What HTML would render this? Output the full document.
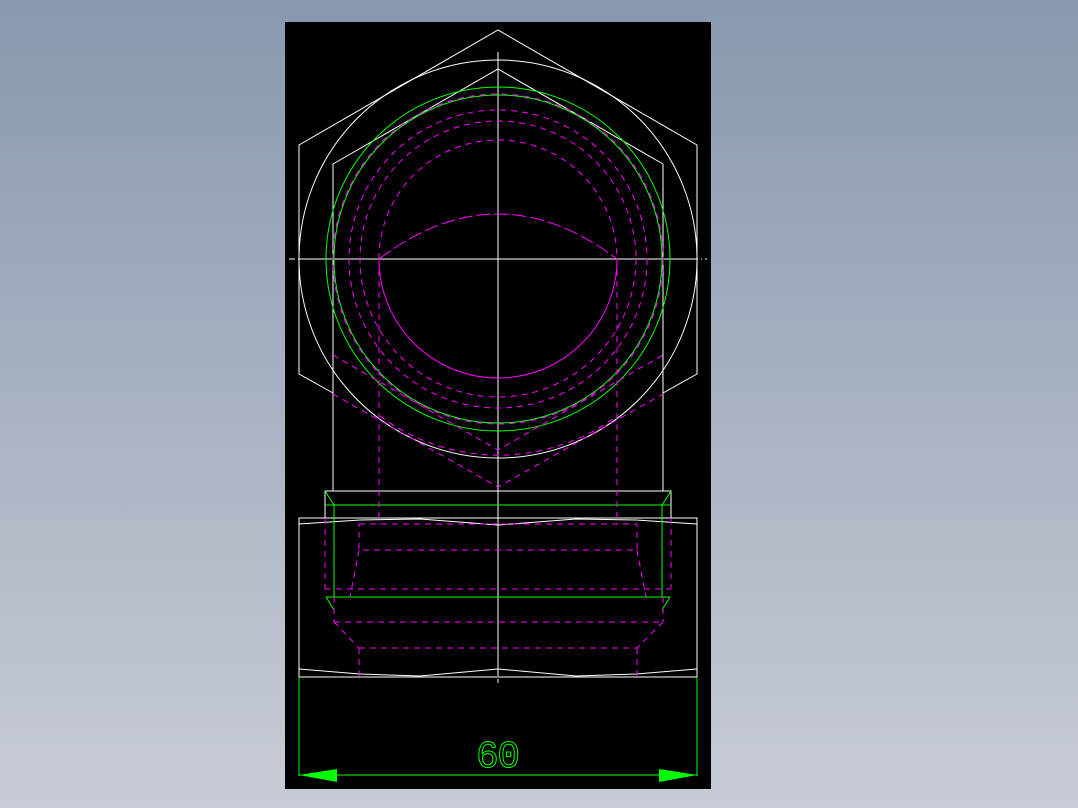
<!DOCTYPE html>
<html><head><style>
html,body{margin:0;padding:0;width:1078px;height:808px;overflow:hidden;background:linear-gradient(#8898ae,#c8ccd6);}
svg{position:absolute;left:0;top:0}
</style></head><body>
<svg width="1078" height="808" viewBox="0 0 1078 808" xmlns="http://www.w3.org/2000/svg">
<rect x="285" y="22" width="426" height="767" fill="#000"/>
<g fill="none" stroke="#fff" stroke-width="1">
<polyline points="333,393 299,374 299,145 498,30 697,145 697,374 663,393"/>
<circle cx="498" cy="259" r="199"/>
<polyline points="333,491 333,164 498,69 663,164 663,491"/>
<line x1="299" y1="259" x2="697" y2="259"/>
<line x1="289" y1="259" x2="707" y2="259" stroke-dasharray="6,3,1,3"/>
<line x1="498" y1="52" x2="498" y2="672"/>
<line x1="498" y1="672" x2="498" y2="686" stroke-dasharray="4,3"/>
<rect x="325" y="491" width="346" height="27"/>
<rect x="299" y="518" width="398" height="159"/>
<path d="M299,524 L360,520 L420,519 L498,525 L576,519 L636,520 L697,524"/>
<path d="M299,669 L360,674 L420,676 L498,669 L576,676 L636,674 L697,669"/>
</g>
<g fill="none" stroke="#0f0" stroke-width="1">
<circle cx="498" cy="259" r="172"/>
<circle cx="498" cy="259" r="164"/>
<line x1="325" y1="505" x2="671" y2="505"/>
<line x1="334" y1="505" x2="334" y2="597"/>
<line x1="662" y1="505" x2="662" y2="597"/>
<line x1="326" y1="597" x2="670" y2="597"/>
<line x1="325" y1="491" x2="334" y2="505"/><line x1="671" y1="491" x2="662" y2="505"/>
<line x1="326" y1="597" x2="334" y2="610"/><line x1="670" y1="597" x2="662" y2="610"/>
<line x1="299" y1="677" x2="299" y2="776"/>
<line x1="697" y1="677" x2="697" y2="776"/>
<line x1="299" y1="775" x2="697" y2="775"/>
</g>
<polygon points="299,775 337,769 337,782" fill="#0f0"/>
<polygon points="697,775 659,769 659,782" fill="#0f0"/>
<text x="498" y="767" text-anchor="middle" font-family="Liberation Mono, monospace" font-size="38" fill="none" stroke="#0f0" stroke-width="1" textLength="44">60</text>
<g fill="none" stroke="#f0f" stroke-width="1">
<path d="M379,259 A119,119 0 0 0 617,259"/>
<path d="M379,259 Q498,169 617,259" stroke-dasharray="14,4"/>
</g>
<g fill="none" stroke="#f0f" stroke-width="1" stroke-dasharray="6,5">
<circle cx="498" cy="259" r="165"/>
<circle cx="498" cy="259" r="149"/>
<circle cx="498" cy="259" r="138"/>
<path d="M379,259 A119,119 0 0 1 617,259"/>
<path d="M380,416 A199,199 0 0 0 617,416"/>
<line x1="379" y1="259" x2="379" y2="524"/>
<line x1="617" y1="259" x2="617" y2="524"/>
<polyline points="333,355 498,450 663,355"/>
<polyline points="333,394 498,487 663,394"/>
<rect x="359" y="524" width="278" height="26"/>
<line x1="325" y1="518" x2="325" y2="589"/>
<line x1="671" y1="518" x2="671" y2="589"/>
<line x1="325" y1="589" x2="671" y2="589"/>
<line x1="359" y1="550" x2="350" y2="597"/>
<line x1="637" y1="550" x2="646" y2="597"/>
<line x1="334" y1="622" x2="663" y2="622"/>
<line x1="359" y1="648" x2="637" y2="648"/>
<line x1="334" y1="622" x2="359" y2="648"/>
<line x1="663" y1="622" x2="637" y2="648"/>
<line x1="359" y1="648" x2="359" y2="677"/>
<line x1="637" y1="648" x2="637" y2="677"/>
<line x1="334" y1="597" x2="334" y2="622"/>
<line x1="663" y1="597" x2="663" y2="622"/>
</g>
</svg>
</body></html>
